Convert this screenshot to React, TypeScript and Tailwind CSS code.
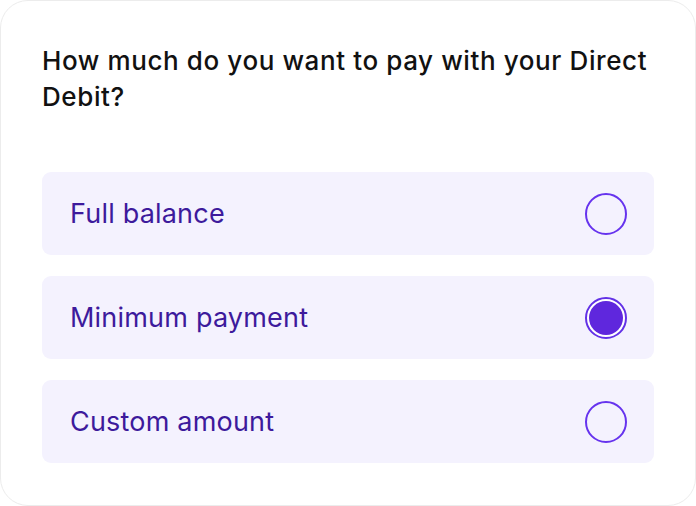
import React, { useState } from 'react';

const options = ['Full balance', 'Minimum payment', 'Custom amount'];

export default function App() {
  const [selected, setSelected] = useState(1);

  return (
    <div className="w-[696px] h-[506px] bg-white" style={{ fontFamily: 'Inter, "Noto Sans", sans-serif' }}>
      <div className="h-full rounded-[28px] border border-[#ececec] bg-white px-[41px] pt-[42px]">
        <h1 className="-mr-[30px] text-[26px] leading-[36px] font-medium text-[#111111] tracking-[0.6px]">
          How much do you want to pay with your Direct Debit?
        </h1>
        <div className="mt-[57px] flex flex-col gap-[21px]">
          {options.map((label, i) => (
            <button
              key={label}
              type="button"
              onClick={() => setSelected(i)}
              className="flex h-[83px] w-full items-center justify-between rounded-[9px] bg-[#f4f2fe] pl-[28px] pr-[27px] text-left"
            >
              <span className="pt-[2px] text-[27px] text-[#3d1a9c] tracking-[0.2px]">{label}</span>
              {selected === i ? (
                <span className="flex h-[42px] w-[42px] items-center justify-center rounded-full border-2 border-[#6231e6] bg-white">
                  <span className="h-[34px] w-[34px] rounded-full bg-[#5f27dd]" />
                </span>
              ) : (
                <span className="h-[42px] w-[42px] rounded-full border-2 border-[#6633ee]" />
              )}
            </button>
          ))}
        </div>
      </div>
    </div>
  );
}
